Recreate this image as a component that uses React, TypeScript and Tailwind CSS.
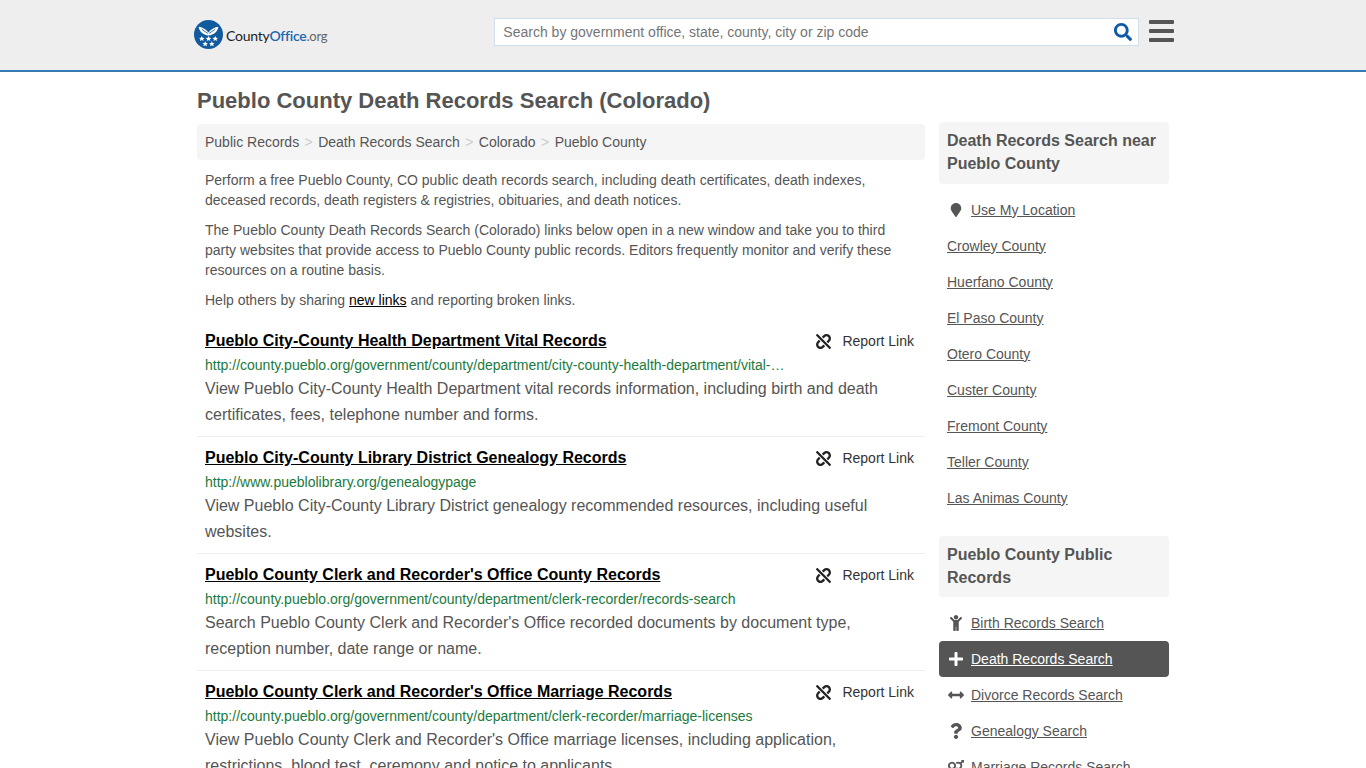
import React from 'react';
import { FaSearch, FaUnlink, FaMapMarker, FaChild, FaPlus, FaArrowsAltH, FaQuestion, FaVenusMars } from 'react-icons/fa';

const results = [
  {
    title: 'Pueblo City-County Health Department Vital Records',
    url: 'http://county.pueblo.org/government/county/department/city-county-health-department/vital-…',
    text: 'View Pueblo City-County Health Department vital records information, including birth and death certificates, fees, telephone number and forms.',
  },
  {
    title: 'Pueblo City-County Library District Genealogy Records',
    url: 'http://www.pueblolibrary.org/genealogypage',
    text: 'View Pueblo City-County Library District genealogy recommended resources, including useful websites.',
  },
  {
    title: "Pueblo County Clerk and Recorder's Office County Records",
    url: 'http://county.pueblo.org/government/county/department/clerk-recorder/records-search',
    text: "Search Pueblo County Clerk and Recorder's Office recorded documents by document type, reception number, date range or name.",
  },
  {
    title: "Pueblo County Clerk and Recorder's Office Marriage Records",
    url: 'http://county.pueblo.org/government/county/department/clerk-recorder/marriage-licenses',
    text: "View Pueblo County Clerk and Recorder's Office marriage licenses, including application, restrictions, blood test, ceremony and notice to applicants.",
  },
];

const nearby = ['Crowley County', 'Huerfano County', 'El Paso County', 'Otero County', 'Custer County', 'Fremont County', 'Teller County', 'Las Animas County'];

const records = [
  { label: 'Birth Records Search', icon: FaChild },
  { label: 'Death Records Search', icon: FaPlus, active: true },
  { label: 'Divorce Records Search', icon: FaArrowsAltH },
  { label: 'Genealogy Search', icon: FaQuestion },
  { label: 'Marriage Records Search', icon: FaVenusMars },
];

function Logo() {
  return (
    <div className="flex items-center">
      <svg width="29" height="29" viewBox="0 0 28 28">
        <circle cx="14" cy="14" r="14" fill="#125a9e" />
        <path d="M4.5 6.5 C8 7 11 8.5 14 12 C17 8.5 20 7 23.500 6.500 C23 11 19 14.500 14 15 C9 14.500 5 11 4.500 6.500 Z" fill="#fff" />
        <path d="M7.500 9 L13.500 13 M20.500 9 L14.500 13" stroke="#125a9e" strokeWidth="0.8" fill="none" />
        <g fill="#fff">
          <path d="M7.500 15.500 l.8 1.600 1.800.2-1.300 1.200.4 1.800-1.700-.9-1.700.9.4-1.800-1.300-1.200 1.800-.2z" />
          <path d="M14 15.500 l.8 1.600 1.800.2-1.300 1.200.4 1.800-1.700-.9-1.700.9.4-1.800-1.300-1.200 1.800-.2z" />
          <path d="M20.500 15.500 l.8 1.600 1.800.2-1.300 1.200.4 1.800-1.700-.9-1.700.9.4-1.800-1.300-1.200 1.800-.2z" />
          <path d="M10.800 20.500 l.8 1.600 1.800.2-1.300 1.200.4 1.800-1.700-.9-1.700.9.4-1.800-1.300-1.200 1.800-.2z" />
          <path d="M17.200 20.500 l.8 1.600 1.800.2-1.300 1.200.4 1.800-1.700-.9-1.700.9.4-1.800-1.300-1.200 1.800-.2z" />
        </g>
      </svg>
      <div className="ml-[3px] mt-[3px] text-[14px] tracking-[-0.25px] font-['Lato',sans-serif]">
        <span className="text-[#222]">County</span>
        <span className="font-semibold text-[#1a66b0]">Office</span>
        <span className="text-[13px] text-[#666]">.org</span>
      </div>
    </div>
  );
}

export default function App() {
  return (
    <div className="h-[768px] overflow-hidden bg-white font-['Liberation_Sans',Arial,sans-serif] text-[14px] text-[#555]">
      <header className="h-[72px] border-b-2 border-[#337ab7] bg-[#eeeeee]">
        <div className="mx-auto flex w-[982px] pl-[3px] pt-[18px]">
          <div className="ml-[-1px] mt-[2px] w-[301px]">
            <Logo />
          </div>
          <div className="flex h-[28px] w-[646px] items-center justify-between border border-[#cfdfee] bg-white pl-2 pr-[6px] text-[#757575]">
            <span>Search by government office, state, county, city or zip code</span>
            <FaSearch className="text-[18px] text-[#0d5aa7]" />
          </div>
          <div className="ml-[10px] mt-[2px] flex flex-col gap-[5px]">
            <div className="h-[4px] w-[25px] rounded-[1px] bg-[#555]" />
            <div className="h-[4px] w-[25px] rounded-[1px] bg-[#555]" />
            <div className="h-[4px] w-[25px] rounded-[1px] bg-[#555]" />
          </div>
        </div>
      </header>

      <div className="mx-auto flex w-[972px] gap-[14px]">
        <main className="w-[728px]">
          <h1 className="mt-[15px] text-[22px] font-bold leading-[28px] text-[#555]">Pueblo County Death Records Search (Colorado)</h1>
          <div className="mt-[9px] flex h-[36px] items-center rounded-[4px] bg-[#f5f5f5] px-2">
            <span>Public Records</span>
            <span className="w-[19px] text-center text-[#ccc]">&gt;</span>
            <span>Death Records Search</span>
            <span className="w-[19px] text-center text-[#ccc]">&gt;</span>
            <span>Colorado</span>
            <span className="w-[19px] text-center text-[#ccc]">&gt;</span>
            <span>Pueblo County</span>
          </div>
          <div className="mt-[10px] flex flex-col gap-[10px] px-2 leading-[20px]">
            <p>Perform a free Pueblo County, CO public death records search, including death certificates, death indexes, deceased records, death registers &amp; registries, obituaries, and death notices.</p>
            <p>The Pueblo County Death Records Search (Colorado) links below open in a new window and take you to third party websites that provide access to Pueblo County public records. Editors frequently monitor and verify these resources on a routine basis.</p>
            <p>
              Help others by sharing <a className="text-black underline">new links</a> and reporting broken links.
            </p>
          </div>
          <div className="mt-[10px]">
            {results.map((r) => (
              <div key={r.title} className="h-[117px] border-b border-[#eeeeee] px-2 pt-[11px]">
                <div className="flex h-[20px] items-center justify-between">
                  <a className="text-[16px] font-bold leading-[20px] text-black underline">{r.title}</a>
                  <div className="flex items-center pr-[3px] text-[#333]">
                    <FaUnlink className="mr-[11px] text-[15px] text-[#222]" />
                    <span>Report Link</span>
                  </div>
                </div>
                <div className="mt-[4px] leading-[20px] text-[#1a7a3c]">{r.url}</div>
                <p className="mt-[1px] text-[16px] leading-[26px] text-[#555]">{r.text}</p>
              </div>
            ))}
          </div>
        </main>

        <aside className="w-[230px] pt-[50px]">
          <h2 className="rounded-[4px] bg-[#f5f5f5] px-2 pb-[9px] pt-[7px] text-[16px] font-bold leading-[23px] text-[#555]">Death Records Search near Pueblo County</h2>
          <ul className="mt-[8px]">
            <li className="flex h-[36px] items-center px-2">
              <span className="flex w-[24px] pl-[2px]"><FaMapMarker className="text-[14px] text-[#555]" /></span>
              <a className="underline">Use My Location</a>
            </li>
            {nearby.map((c) => (
              <li key={c} className="flex h-[36px] items-center px-2">
                <a className="underline">{c}</a>
              </li>
            ))}
          </ul>
          <h2 className="mt-[20px] rounded-[4px] bg-[#f5f5f5] px-2 pb-[8px] pt-[7px] text-[16px] font-bold leading-[23px] text-[#555]">Pueblo County Public Records</h2>
          <ul className="mt-[8px]">
            {records.map((r) => {
              const Icon = r.icon;
              return (
                <li key={r.label} className={`flex h-[36px] items-center rounded-[4px] px-2 ${r.active ? 'bg-[#555] text-white' : ''}`}>
                  <span className="flex w-[24px] justify-center pr-[7px]"><Icon className="text-[16px]" /></span>
                  <a className="underline">{r.label}</a>
                </li>
              );
            })}
          </ul>
        </aside>
      </div>
    </div>
  );
}
